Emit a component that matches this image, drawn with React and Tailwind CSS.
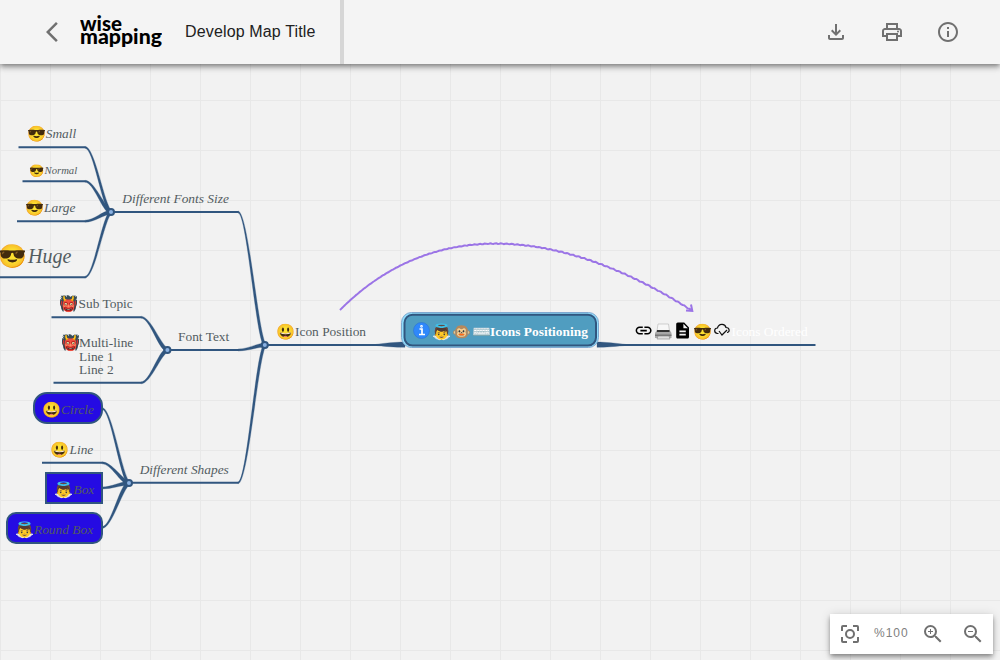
import React from "react";
import {
  MdArrowBackIosNew,
  MdOutlineFileDownload,
  MdOutlinePrint,
  MdInfoOutline,
  MdZoomIn,
  MdZoomOut,
  MdInsertLink,
  MdDescription,
} from "react-icons/md";

const SERIF = "font-['Liberation_Serif','Noto_Color_Emoji',serif]";

const labels = [
  { text: "Small", cls: "left-[45.7px] top-[127px] text-[13.4px] italic" },
  { text: "Normal", cls: "left-[44.5px] top-[165px] text-[10.7px] italic" },
  { text: "Large", cls: "left-[44px] top-[201px] text-[13.4px] italic" },
  { text: "Huge", cls: "left-[28px] top-[246px] text-[20px] italic" },
  { text: "Different Fonts Size", cls: "left-[122.3px] top-[192px] text-[13.4px] italic" },
  { text: "Sub Topic", cls: "left-[78.5px] top-[297px] text-[13.4px]" },
  { text: "Multi-line", cls: "left-[79px] top-[336px] text-[13.4px]" },
  { text: "Line 1", cls: "left-[79px] top-[350px] text-[13.4px]" },
  { text: "Line 2", cls: "left-[79px] top-[363px] text-[13.4px]" },
  { text: "Font Text", cls: "left-[178px] top-[330px] text-[13.4px]" },
  { text: "Circle", cls: "left-[61px] top-[403px] text-[13.4px] italic" },
  { text: "Line", cls: "left-[69.5px] top-[443px] text-[13.4px] italic" },
  { text: "Box", cls: "left-[73.5px] top-[483px] text-[13.4px] italic" },
  { text: "Round Box", cls: "left-[34px] top-[523px] text-[13.4px] italic" },
  { text: "Different Shapes", cls: "left-[139.700px] top-[463px] text-[13.4px] italic" },
  { text: "Icon Position", cls: "left-[295px] top-[325px] text-[13.4px]" },
  { text: "Icons Positioning", cls: "left-[490px] top-[325px] text-[13.4px] font-bold text-white" },
  { text: "Icons Ordered", cls: "left-[731.5px] top-[325px] text-[13.4px] text-white" },
];

const emojis = [
  { text: "😎", cls: "left-[27px] top-[126px] text-[15.3px]" },
  { text: "😎", cls: "left-[29px] top-[165px] text-[12.3px]" },
  { text: "😎", cls: "left-[25.3px] top-[200px] text-[15.3px]" },
  { text: "😎", cls: "left-[-1.500px] top-[245px] text-[23px]" },
  { text: "👹", cls: "left-[59.3px] top-[296px] text-[15.3px]" },
  { text: "👹", cls: "left-[61px] top-[335px] text-[15.3px]" },
  { text: "😃", cls: "left-[42px] top-[402px] text-[15.3px]" },
  { text: "😃", cls: "left-[50.500px] top-[442px] text-[15.3px]" },
  { text: "👼", cls: "left-[54.300px] top-[482px] text-[15.3px]" },
  { text: "👼", cls: "left-[15px] top-[522px] text-[15.3px]" },
  { text: "😃", cls: "left-[276px] top-[324px] text-[15.3px]" },
  { text: "👼", cls: "left-[432px] top-[324px] text-[15.3px]" },
  { text: "🐵", cls: "left-[452px] top-[324px] text-[15.3px]" },
  { text: "⌨️", cls: "left-[472px] top-[324px] text-[15.3px]" },
  { text: "😎", cls: "left-[693.500px] top-[324px] text-[15.3px]" },
];

const underlines = [
  "M18.500 147.3H85",
  "M22.500 181.3H85",
  "M17 221.2H85",
  "M0 277.2H85",
  "M111 212H238",
  "M51.500 317.2H141",
  "M53.500 382.8H141",
  "M167 350H238",
  "M42 462.8H102",
  "M129 482.8H238",
  "M265 345H405",
  "M597 345H815.5",
];

// Each branch runs from the end of a topic line to its parent's joint: [x0, y0, x1, y1].
const branches = [
  [85, 147.3, 111, 212],
  [85, 181.3, 111, 212],
  [85, 221.2, 111, 212],
  [85, 277.2, 111, 212],
  [141, 317.2, 167.4, 350],
  [141, 382.8, 167.4, 350],
  [238, 350, 264.8, 345],
  [238, 212, 264.8, 345],
  [238, 482.8, 264.8, 345],
  [102, 408.5, 129, 483],
  [102, 462.8, 129, 483],
  [102, 488, 129, 483],
  [102, 527.5, 129, 483],
];

function taper([x0, y0, x1, y1]) {
  const dx = x1 - x0;
  const dy = y1 - y0;
  const len = Math.hypot(dx, dy);
  const nx = -dy / len;
  const ny = dx / len;
  const w = len > 60 ? 1.4 : 2;
  const edge = (s) => [
    [x0, y0 + s],
    [x0 + dx * 0.36 + nx * s, y0 + ny * s],
    [x1 - dx * 0.3 + nx * s * w * 0.9, y1 - dy * 0.08 + ny * s * w * 0.9],
    [x1 + nx * s * w, y1 + ny * s * w],
  ];
  const p = edge(-1).map((v) => v.join(" "));
  const q = edge(1).map((v) => v.join(" "));
  return `M${p[0]}C${p[1]} ${p[2]} ${p[3]}L${q[3]}C${q[2]} ${q[1]} ${q[0]}Z`;
}

// Relationship arrow: a cubic whose line gets a growing ripple towards its head.
function rippledCurve() {
  const at = (a, b, c, d, t) => {
    const u = 1 - t;
    return u * u * u * a + 3 * u * u * t * b + 3 * u * t * t * c + t * t * t * d;
  };
  const n = 240;
  return Array.from({ length: n + 1 }, (_, i) => {
    const t = i / n;
    const ripple = Math.min(0.5, t * 0.7) * Math.sin(i * 1.75);
    const x = at(340, 431, 557, 691, t);
    const y = at(310, 218, 225, 310, t) + ripple;
    return `${x.toFixed(2)},${y.toFixed(2)}`;
  }).join(" ");
}

const joints = [
  [111, 212],
  [167.4, 350],
  [264.8, 345],
  [129, 483],
];

function Header() {
  return (
    <header className="relative z-10 flex h-16 items-center bg-[#f4f4f4] text-[#707070] shadow-[0_2px_4px_-1px_rgba(0,0,0,0.3),0_4px_5px_0_rgba(0,0,0,0.2),0_1px_10px_0_rgba(0,0,0,0.14)]">
      <div className="flex h-full w-[344px] items-center border-r-4 border-[#d6d6d6] pl-10">
        <MdArrowBackIosNew className="size-6" />
        <svg className="ml-4 h-10 w-[82px] text-black" viewBox="0 0 82 40">
          <g
            className="font-['Lato',sans-serif] font-black"
            fill="currentColor"
            fontSize="20.5"
          >
            <text x="0" y="19" textLength="42" lengthAdjust="spacingAndGlyphs">wise</text>
            <text x="0" y="32" textLength="82" lengthAdjust="spacingAndGlyphs">mapping</text>
          </g>
        </svg>
        <span className="ml-[23px] whitespace-nowrap font-['Liberation_Sans',sans-serif] text-[16px] tracking-[0.15px] text-[#212121]">
          Develop Map Title
        </span>
      </div>
      <nav className="ml-auto flex items-center gap-8 pr-10">
        <MdOutlineFileDownload className="size-6" />
        <MdOutlinePrint className="size-6" />
        <MdInfoOutline className="size-6" />
      </nav>
    </header>
  );
}

function FitIcon({ className }) {
  return (
    <svg className={className} viewBox="0 0 24 24" fill="none" stroke="currentColor" strokeWidth="2">
      <path d="M4 9V5a1 1 0 0 1 1-1h4M15 4h4a1 1 0 0 1 1 1v4M20 15v4a1 1 0 0 1-1 1h-4M9 20H5a1 1 0 0 1-1-1v-4" />
      <circle cx="12" cy="12" r="4" />
    </svg>
  );
}

function ZoomPanel() {
  return (
    <div className="absolute right-[7px] bottom-1.5 z-10 flex h-10 w-[163px] items-center bg-white text-[#707070] shadow-[0_2px_4px_-1px_rgba(0,0,0,0.3),0_4px_5px_0_rgba(0,0,0,0.2),0_1px_10px_0_rgba(0,0,0,0.14)]">
      <FitIcon className="ml-2 size-6" />
      <span className="ml-3 w-[36px] pb-0.5 whitespace-nowrap font-['Liberation_Sans',sans-serif] text-[12px] tracking-[1px] text-[#808080]">
        %100
      </span>
      <MdZoomIn className="ml-[11px] size-6" />
      <MdZoomOut className="ml-4 size-6" />
    </div>
  );
}

function Connections() {
  return (
    <svg className="absolute inset-0 h-[660px] w-[1000px]" viewBox="0 0 1000 660" fill="none">
      <g stroke="#e8e8e8">
        {Array.from({ length: 20 }, (_, i) => (
          <path key={i} d={`M${i * 50 + 0.5} 0V660`} />
        ))}
        {Array.from({ length: 12 }, (_, i) => (
          <path key={i} d={`M0 ${i * 50 + 100.5}H1000`} />
        ))}
      </g>
      <g stroke="#31567f" strokeWidth="2">
        {underlines.map((d) => (
          <path key={d} d={d} />
        ))}
      </g>
      <g fill="#31567f" stroke="#31567f" strokeWidth="0.3">
        {branches.map((b) => (
          <path key={b.join()} d={taper(b)} />
        ))}
        <path d="M372 345C385 343 395 342.200 405 342L405 347.300C395 347.300 385 346.500 372 345Z" />
        <path d="M630 345C615 343 605 342.200 597 342L597 347.300C605 347.300 615 346.500 630 345Z" />
      </g>
      <g fill="#8bb2e3" stroke="#31567f" strokeWidth="2">
        {joints.map(([x, y]) => (
          <circle key={y} cx={x} cy={y} r="3" />
        ))}
      </g>
      <g fill="#250be3" stroke="#31567f" strokeWidth="2">
        <rect x="34" y="393" width="68" height="30" rx="13" />
        <rect x="46" y="473" width="56" height="30" />
        <rect x="7" y="513" width="95" height="30" rx="9" />
      </g>
      <g stroke="#9b74e6" strokeWidth="2">
        <polyline points={rippledCurve()} />
        <path d="M686 310.500L692.300 311L691 304.500" />
      </g>
      <rect x="401.500" y="312.500" width="197" height="35" rx="10" fill="#8fdcfb" stroke="#7fa8d0" />
      <rect x="404.500" y="314.800" width="191.500" height="30.800" rx="8" fill="#509dc0" stroke="#31567f" strokeWidth="2" />
      <circle cx="421.500" cy="330.500" r="8" fill="#2f88fb" stroke="#2b72d0" strokeWidth="0.6" />
      <g stroke="#fff" strokeWidth="1.700">
        <path d="M419.500 329H422V334.500M419 334.500H425" />
        <circle cx="421.500" cy="326.300" r="0.500" />
      </g>
      <g>
        <path d="M658 324H668.500L669.500 331H657Z" fill="#f7f7f7" stroke="#bdbdbd" strokeWidth="0.7" />
        <path d="M656.500 330.500H670L671.500 333V338H655V333Z" fill="#a8a8a8" />
        <path d="M657 330H669.500V332H657Z" fill="#333" />
        <path d="M655 334.500H671.500V336H655Z" fill="#777" />
        <path d="M658 336H669L670 339H657Z" fill="#dedede" stroke="#888" strokeWidth="0.6" />
      </g>
      <path
        d="M718.500 333.500H717.500C713.500 333 714 328 717.500 328C718.500 323.500 725 323 726 327.500C730 327.500 730 332.500 727 332.500M719 331L722 335L727 330"
        stroke="#111"
        strokeWidth="1.200"
      />
    </svg>
  );
}

export default function App() {
  return (
    <main className="relative flex h-[660px] w-[1000px] flex-col overflow-hidden bg-[#f2f2f2]">
      <Header />
      <div className="absolute inset-0">
        <Connections />
        <div className={`leading-none whitespace-pre text-[#525c61] ${SERIF}`}>
          {labels.map((l) => (
            <span key={l.text} className={`absolute ${l.cls}`}>{l.text}</span>
          ))}
          {emojis.map((e) => (
            <span key={e.cls} className={`absolute ${e.cls}`}>{e.text}</span>
          ))}
        </div>
        <MdInsertLink className="absolute left-[633.500px] top-[321px] size-[19.200px] text-black" />
        <MdDescription className="absolute left-[673.400px] top-[321px] size-[19.200px] text-black" />
      </div>
      <ZoomPanel />
    </main>
  );
}
